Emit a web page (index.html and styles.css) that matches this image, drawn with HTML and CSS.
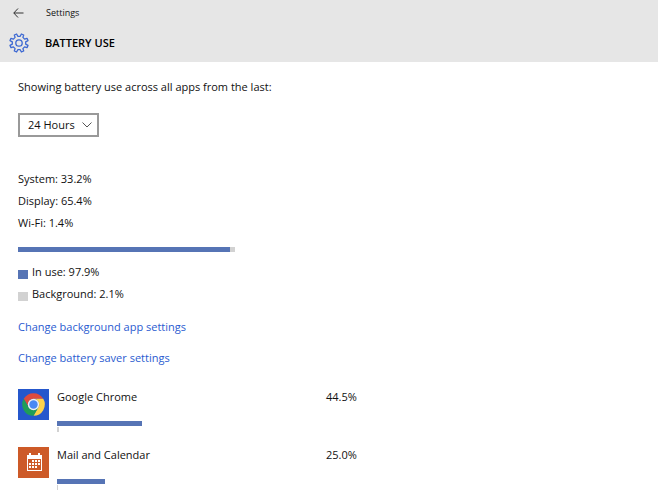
FILE: index.html
```html
<!DOCTYPE html>
<html lang="en">
<head>
    <meta charset="UTF-8">
    <meta name="viewport" content="width=device-width, initial-scale=1.0">
    <title>Settings - Battery use</title>
    <link rel="stylesheet" href="styles.css">
</head>
<body>
    <header class="header">
        <div class="titlebar">
            <button class="back" type="button" aria-label="Back">
                <svg width="11" height="10" viewBox="0 0 11 10"><path d="M5 .5 .8 5 5 9.500M.8 5H10.500"/></svg>
            </button>
            <span>Settings</span>
        </div>
        <div class="heading">
            <svg class="gear" width="20" height="20" viewBox="-10 -10 20 20">
                <path d="M-1.200-6.700 1.200-6.700 2.400-9 4.700-8 3.900-5.600 5.600-3.900 8-4.700 9-2.400 6.700-1.200 6.700 1.200 9 2.400 8 4.700 5.600 3.900 3.900 5.600 4.700 8 2.400 9 1.200 6.700-1.200 6.700-2.400 9-4.700 8-3.900 5.600-5.600 3.900-8 4.700-9 2.400-6.700 1.200-6.700-1.200-9-2.400-8-4.700-5.600-3.900-3.900-5.600-4.700-8-2.400-9Z"/>
                <circle r="3.2"/>
            </svg>
            <h1>BATTERY USE</h1>
        </div>
    </header>

    <main class="content">
        <label for="period">Showing battery use across all apps from the last:</label>
        <div class="dropdown">
            <select id="period">
                <option>24 Hours</option>
                <option>48 Hours</option>
                <option>1 Week</option>
            </select>
            <svg class="chevron" width="10" height="6" viewBox="0 0 10 6"><path d="M.5.5 5 5 9.500.5"/></svg>
        </div>

        <ul class="stats">
            <li>System: 33.2%</li>
            <li>Display: 65.4%</li>
            <li>Wi-Fi: 1.4%</li>
        </ul>

        <div class="total">
            <div class="used" style="width: 97.9%"></div>
        </div>

        <ul class="legend">
            <li><span class="swatch"></span>In use: 97.9%</li>
            <li><span class="swatch light"></span>Background: 2.1%</li>
        </ul>

        <nav class="links">
            <a href="#">Change background app settings</a>
            <a href="#">Change battery saver settings</a>
        </nav>

        <ul class="apps">
            <li class="app">
                <svg class="icon chrome" width="31" height="31" viewBox="-9 -9 66 66">
                    <path fill="#dd4b3e" d="M3.200 12A24 24 0 0 1 44.800 12H24A12 12 0 0 0 13.600 30Z"/>
                    <path fill="#fdd24a" d="M44.800 12A24 24 0 0 1 24 48L34.400 30A12 12 0 0 0 24 12Z"/>
                    <path fill="#1f9d58" d="M24 48A24 24 0 0 1 3.200 12L13.600 30A12 12 0 0 0 34.400 30Z"/>
                    <circle fill="#f1f1f1" cx="24" cy="24" r="12"/>
                    <circle fill="#4a88f2" cx="24" cy="24" r="9"/>
                </svg>
                <div class="usage">
                    <div class="name">Google Chrome</div>
                    <div class="bar" style="width: 85px"></div>
                    <div class="bar light" style="width: 2px"></div>
                </div>
                <div class="percent">44.5%</div>
            </li>
            <li class="app">
                <svg class="icon mail" width="31" height="31" viewBox="0 0 31 31">
                    <path fill="#fff" fill-rule="evenodd" d="M9 8h2V6h2v2h7V6h2v2h2v16H9ZM10 12v11h13V12Z"/>
                    <path fill="#fff" d="M14 13h2v2h-2ZM17 13h2v2h-2ZM20 13h2v2h-2ZM11 16h2v2h-2ZM14 16h2v2h-2ZM17 16h2v2h-2ZM20 16h2v2h-2ZM11 19h2v2h-2ZM14 19h2v2h-2ZM17 19h2v2h-2Z"/>
                </svg>
                <div class="usage">
                    <div class="name">Mail and Calendar</div>
                    <div class="bar" style="width: 48px"></div>
                    <div class="bar light" style="width: 1px"></div>
                </div>
                <div class="percent">25.0%</div>
            </li>
        </ul>
    </main>
</body>
</html>
```
FILE: styles.css
```css
body {
    margin: 0;
    background: #fff;
    color: #111;
    font-family: "Open Sans", "Noto Sans", sans-serif;
    font-size: 11px;
    line-height: 22px;
}
ul {
    list-style: none;
    margin: 0;
    padding: 0;
}
svg {
    display: block;
}
.header {
    background: #e6e6e6;
    padding: 2px 9px 8px;
}
.titlebar {
    display: flex;
    align-items: center;
    gap: 22px;
    font-size: 9px;
}
.back {
    padding: 0 0 0 4px;
    border: none;
    background: none;
}
.back path {
    fill: none;
    stroke: #333;
}
.heading {
    display: flex;
    align-items: center;
    gap: 16px;
    margin-top: 8px;
}
.gear {
    fill: none;
    stroke: #3c68d2;
    stroke-width: 1.3;
    stroke-linejoin: round;
}
h1 {
    margin: 0;
    font-size: 11px;
    font-weight: 600;
    color: #000;
}
.content {
    padding: 14px 18px 0;
}
.content > label {
    display: block;
}
.dropdown {
    position: relative;
    width: 81px;
    margin-top: 15px;
}
select {
    display: block;
    width: 100%;
    height: 24px;
    padding: 0 8px;
    border: 2px solid #999;
    border-radius: 0;
    background: #fff;
    color: #111;
    font: inherit;
    line-height: 20px;
    appearance: none;
}
.chevron {
    position: absolute;
    top: 9px;
    right: 7px;
    fill: none;
    stroke: #555;
    pointer-events: none;
}
.stats {
    margin-top: 31px;
}
.total {
    max-width: 217px;
    margin-top: 13px;
    background: #d2d2d2;
}
.used,
.bar {
    height: 5px;
    background: #5674b5;
}
.legend {
    margin-top: 9px;
}
.legend li {
    display: flex;
    align-items: center;
    gap: 4px;
}
.swatch {
    width: 10px;
    height: 9px;
    margin-top: 4px;
    background: #5674b5;
}
.light {
    background: #d2d2d2;
}
.links {
    display: flex;
    flex-direction: column;
    align-items: flex-start;
    gap: 9px;
    margin-top: 11px;
}
a {
    color: #2a5bd0;
    text-decoration: none;
}
.apps {
    display: grid;
    gap: 12px;
    margin-top: 17px;
}
.app {
    display: grid;
    grid-template-columns: 31px minmax(0, 261px) auto;
    gap: 8px;
}
.icon {
    margin-top: 3px;
}
.chrome {
    background: #2557cc;
}
.mail {
    background: #cd5a28;
}
.name {
    margin-bottom: 13px;
}
.bar + .bar {
    margin-top: 1px;
}
.bar.light {
    background: #d2d2d2;
}
```
